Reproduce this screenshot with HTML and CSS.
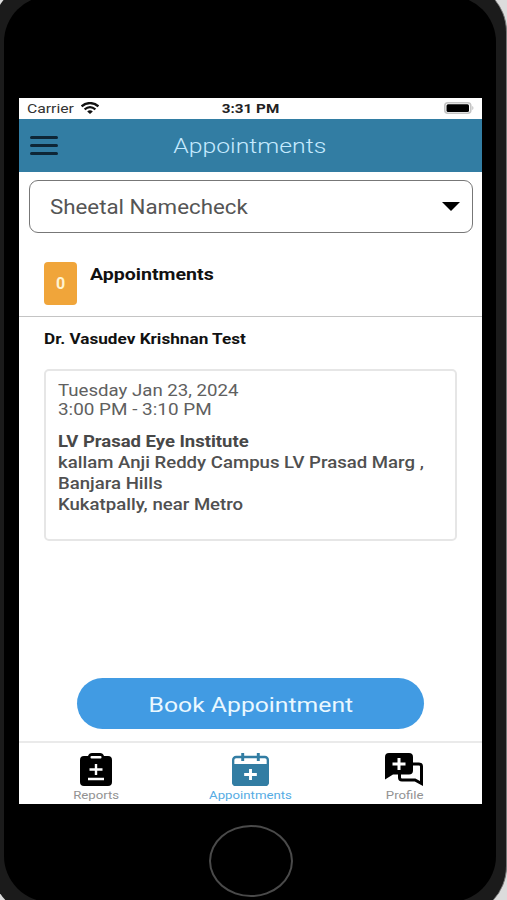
FILE: index.html
```
<!DOCTYPE html>
<html lang="en">
<head>
    <meta charset="UTF-8">
    <meta name="viewport" content="width=device-width, initial-scale=1.0">
    <title>Appointments</title>
    <link rel="stylesheet" href="styles.css">
</head>
<body>
    <div class="phone">
        <div class="bezel">
            <div class="screen">
                <!-- Status bar -->
                <div class="status-bar">
                    <div class="carrier">
                        <span class="carrier-name">Carrier</span>
                        <svg class="wifi" viewBox="0 0 18 12" preserveAspectRatio="none">
                            <path d="M0.6 4.4C5.5 0 12.5 0 17.4 4.4" fill="none" stroke="#111" stroke-width="2.4"/>
                            <path d="M3.6 7.4C7 4.6 11 4.6 14.4 7.4" fill="none" stroke="#111" stroke-width="2.2"/>
                            <path d="M6.2 9.5C8 7.9 10 7.9 11.8 9.5L9 12z" fill="#111"/>
                        </svg>
                    </div>
                    <span class="clock">3:31 PM</span>
                    <svg class="battery" viewBox="0 0 30 12">
                        <rect x="0.8" y="0.8" width="26" height="10.4" rx="3" fill="#fff" stroke="#c4c4c4" stroke-width="1.6"/>
                        <rect x="2.5" y="2.2" width="22.5" height="7.8" rx="1.5" fill="#000"/>
                        <path d="M28.3 4v4c1.5-.6 1.5-3.4 0-4z" fill="#bbb"/>
                    </svg>
                </div>

                <header class="app-header">
                    <div class="menu"><i></i><i></i><i></i></div>
                    <h1>Appointments</h1>
                </header>

                <main>
                    <div class="select">
                        <span class="select-name">Sheetal Namecheck</span>
                        <svg class="caret" viewBox="0 0 18 9" preserveAspectRatio="none"><path d="M0 0h18L9 9z"/></svg>
                    </div>

                    <div class="summary">
                        <div class="count">0</div>
                        <h2>Appointments</h2>
                    </div>

                    <h3>Dr. Vasudev Krishnan Test</h3>

                    <div class="card">
                        <p class="date">Tuesday Jan 23, 2024</p>
                        <p class="time">3:00 PM - 3:10 PM</p>
                        <p class="place">LV Prasad Eye Institute</p>
                        <p class="address">kallam Anji Reddy Campus LV Prasad Marg ,</p>
                        <p class="address">Banjara Hills</p>
                        <p class="address">Kukatpally, near Metro</p>
                    </div>

                    <button class="book"><span>Book Appointment</span></button>
                </main>

                <nav class="tabs">
                    <a class="tab">
                        <svg width="32" height="33" viewBox="0 0 32 33">
                            <path d="M4 3h4q1-3 4-3h8q3 0 4 3h4q4 0 4 4v22q0 4-4 4H4q-4 0-4-4V7q0-4 4-4z"/>
                            <rect x="10.5" y="3" width="11" height="2.6" rx="1" fill="#fff"/>
                            <path d="M16 11v11M9.5 16.5h13M8 26h16" stroke="#fff" stroke-width="2.4"/>
                        </svg>
                        <span>Reports</span>
                    </a>
                    <a class="tab active">
                        <svg width="37" height="33" viewBox="0 0 38 33" preserveAspectRatio="none">
                            <rect x="1.2" y="4" width="35.6" height="28" rx="3" fill="#fff" stroke="#327da3" stroke-width="2.4"/>
                            <path d="M0 11h38v18q0 4-4 4H4q-4 0-4-4z" fill="#327da3"/>
                            <path d="M11 0v8M27 0v8" stroke="#327da3" stroke-width="3"/>
                            <path d="M19 16v11M12.5 21.5h13" stroke="#fff" stroke-width="3"/>
                        </svg>
                        <span>Appointments</span>
                    </a>
                    <a class="tab">
                        <svg width="38" height="33" viewBox="0 0 38 33">
                            <path d="M28 11h6q2.5 0 2.5 2.5V30.5L30 27H17q-2.5 0-2.5-2.5v-4" fill="none" stroke="#000" stroke-width="3"/>
                            <path d="M4 0h20q4 0 4 4v13.5q0 4-4 4H8L0 26.5V4q0-4 4-4z"/>
                            <path d="M14 5v12M7.5 11h13" stroke="#fff" stroke-width="3"/>
                        </svg>
                        <span>Profile</span>
                    </a>
                </nav>
            </div>
            <div class="home-button"></div>
        </div>
    </div>
</body>
</html>
```
FILE: styles.css
```
* {
    box-sizing: border-box;
    margin: 0;
    padding: 0;
}
body {
    width: 507px;
    height: 900px;
    overflow: hidden;
    background-color: #dcdcdc;
    font-family: Roboto, sans-serif;
    white-space: nowrap;
}
/* The phone is a little larger than the window */
.phone {
    width: 515px;
    height: 934px;
    margin: -18px 0 0 -8px;
    padding: 14px 10px 14px 12px;
    background-color: #1b1b1b;
    border-right: 1px solid #777;
    border-radius: 50px;
}
.bezel {
    height: 906px;
    padding: 101.5px 14px 0 15px;
    background-color: #000;
    border-radius: 46px;
}
.screen {
    display: flex;
    flex-direction: column;
    width: 462.5px;
    height: 706px;
    background-color: #fff;
}
.status-bar {
    display: grid;
    grid-template-columns: 1fr auto 1fr;
    align-items: center;
    height: 21px;
    padding: 0 8px;
    color: #333;
    font-size: 13px;
}
.carrier {
    display: flex;
    align-items: center;
}
.carrier-name {
    width: 54px;
    transform: scaleX(1.21);
    transform-origin: left;
}
.wifi {
    width: 18px;
    height: 12px;
}
.clock {
    color: #222;
    font-weight: 700;
    transform: scaleX(1.17);
}
.battery {
    justify-self: end;
    width: 30px;
    height: 12px;
}
.app-header {
    display: grid;
    grid-template-columns: 28px 1fr 28px;
    align-items: center;
    height: 53px;
    padding: 0 10.5px;
    background-color: #327da3;
}
.menu {
    display: flex;
    flex-direction: column;
    gap: 5px;
}
.menu i {
    height: 3px;
    background-color: #0e2636;
    border-radius: 1.5px;
}
h1 {
    padding-top: 2px;
    color: #c5eaff;
    font-size: 21px;
    font-weight: 300;
    text-align: center;
    transform: translateX(-1px) scaleX(1.18);
}
main {
    display: flex;
    flex-direction: column;
    flex: 1;
    padding-top: 8px;
}
.select {
    display: flex;
    align-items: center;
    justify-content: space-between;
    height: 53px;
    margin: 0 8.5px 0 10px;
    padding: 0 12px 0 20px;
    border: 1px solid #777;
    border-radius: 9px;
}
.select-name {
    padding-top: 2px;
    color: #555;
    font-size: 20px;
    transform: scaleX(1.115);
    transform-origin: left;
}
.caret {
    width: 18px;
    height: 9px;
}
.summary {
    display: flex;
    gap: 13px;
    height: 84px;
    padding: 29px 0 0 25px;
    border-bottom: 1px solid #c4c4c4;
}
.count {
    width: 33px;
    height: 43px;
    background-color: #f0a53a;
    color: #fff3d0;
    border-radius: 4px;
    font-size: 16px;
    font-weight: 700;
    line-height: 43px;
    text-align: center;
}
h2 {
    color: #111;
    font-size: 17px;
    font-weight: 700;
    line-height: 24px;
    transform: scaleX(1.15);
    transform-origin: left;
}
h3 {
    width: 190px;
    margin: 11px 0 0 25px;
    color: #111;
    font-size: 15px;
    font-weight: 700;
    line-height: 22px;
    transform: scaleX(1.145);
    transform-origin: left;
}
.card {
    height: 172px;
    margin: 19px 25px 0 24.5px;
    padding: 10px 12px;
    border: 2px solid #e6e6e6;
    border-radius: 5px;
    color: #606060;
    font-size: 16.5px;
    line-height: 19px;
}
.card p {
    width: 320px;
    transform: scaleX(1.13);
    transform-origin: left;
}
.card .time {
    transform: scaleX(1.145);
}
.card .place {
    margin-top: 12px;
    color: #484848;
    font-weight: 700;
    line-height: 21.3px;
    transform: scaleX(1.12);
}
.card .address {
    color: #505050;
    font-weight: 500;
    line-height: 21.3px;
    transform: scaleX(1.126);
}
.book {
    width: 347px;
    height: 51px;
    margin: auto auto 12px 58px;
    background-color: #419be3;
    border: none;
    border-radius: 26px;
    color: #eaf8ff;
    font-family: inherit;
    font-size: 21px;
}
.book span {
    display: inline-block;
    padding-top: 2px;
    transform: scaleX(1.177);
}
.tabs {
    display: grid;
    grid-template-columns: repeat(3, 1fr);
    height: 62.5px;
    border-top: 2px solid #eaeaea;
}
.tab {
    display: flex;
    flex-direction: column;
    align-items: center;
    padding-top: 10px;
    color: #929292;
    font-size: 11px;
    line-height: 20px;
}
.tab span {
    transform: scaleX(1.2);
}
.tab.active {
    color: #55ace4;
}
.home-button {
    width: 84px;
    height: 72px;
    margin: 21px 0 0 189.5px;
    border: 2px solid #4a4a4a;
    border-radius: 50%;
}
```
